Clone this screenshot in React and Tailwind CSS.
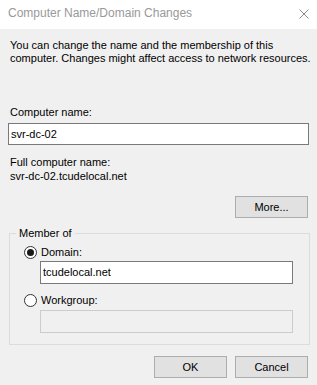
import React from "react";

const Radio = ({ checked }) => (
  <span className="w-[13px] h-[13px] rounded-full border border-[#333] bg-white flex items-center justify-center shrink-0">
    {checked && <span className="w-[7px] h-[7px] rounded-full bg-[#1a1a1a]" />}
  </span>
);

const Button = ({ children }) => (
  <button className="w-[73px] h-[22px] bg-[#e1e1e1] border border-[#adadad] text-[11px] text-black flex items-center justify-center">
    {children}
  </button>
);

export default function App() {
  return (
    <div className="w-[317px] h-[385px] bg-[#f0f0f0] flex flex-col font-['Liberation_Sans',Arial,sans-serif] text-[11px] leading-[13px] text-black overflow-hidden">
      {/* title bar */}
      <div className="h-[29px] bg-white flex items-center justify-between pl-[8px] pr-[8px] shrink-0">
        <span className="text-[12px] text-[#999] -mt-[2px]">Computer Name/Domain Changes</span>
        <svg width="10" height="10" viewBox="0 0 10 10" className="-mt-[2px]">
          <path d="M0.5 0.5 L9.5 9.5 M9.5 0.5 L0.5 9.5" stroke="#8a8a8a" strokeWidth="1" fill="none" />
        </svg>
      </div>

      <div className="flex flex-col px-[8px]">
        <p className="mt-[10px] px-[2px] whitespace-nowrap">
          You can change the name and the membership of this
          <br />
          computer. Changes might affect access to network resources.
        </p>

        <label className="mt-[41px] px-[2px]">Computer name:</label>
        <div className="mt-[4px] h-[22px] w-[301px] border border-[#7a7a7a] bg-white flex items-center px-[2px]">
          svr-dc-02
        </div>

        <span className="mt-[11px] px-[2px]">Full computer name:</span>
        <span className="mt-[1px] px-[2px]">svr-dc-02.tcudelocal.net</span>

        <div className="mt-[13px] flex justify-end pr-[1px]">
          <Button>More...</Button>
        </div>

        <div className="relative mt-[15px] ml-[1px] w-[301px] border border-[#dcdcdc] pt-[12px] pb-[11px] pl-[14px]">
          <span className="absolute -top-[7px] left-[6px] px-[3px] bg-[#f0f0f0]">Member of</span>
          <div className="flex items-center gap-[4px]">
            <Radio checked />
            <span>Domain:</span>
          </div>
          <div className="mt-[2px] ml-[16px] h-[23px] w-[253px] border border-[#7a7a7a] bg-white flex items-center px-[2px]">
            tcudelocal.net
          </div>
          <div className="mt-[10px] flex items-center gap-[4px]">
            <Radio />
            <span>Workgroup:</span>
          </div>
          <div className="mt-[3px] ml-[16px] h-[23px] w-[253px] border border-[#cccccc] bg-[#f0f0f0]" />
        </div>

        <div className="mt-[11px] flex justify-end gap-[8px] pr-[1px]">
          <Button>OK</Button>
          <Button>Cancel</Button>
        </div>
      </div>
    </div>
  );
}
